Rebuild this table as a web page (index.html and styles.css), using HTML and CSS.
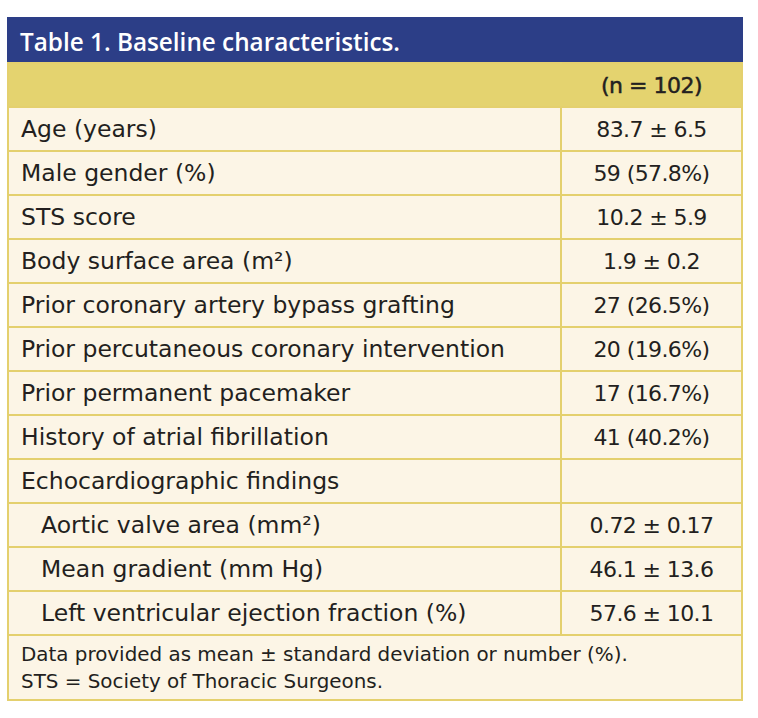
FILE: index.html
```html
<!DOCTYPE html>
<html>
<head>
<meta charset="utf-8">
<link rel="stylesheet" href="styles.css">
</head>
<body>
<div class="card">
  <div class="title">Table 1. Baseline characteristics.</div>
  <table class="tbl">
    <thead>
      <tr><th class="lab"></th><th class="val">(n = 102)</th></tr>
    </thead>
    <tbody>
      <tr><td class="lab">Age (years)</td><td class="val">83.7 ± 6.5</td></tr>
      <tr><td class="lab">Male gender (%)</td><td class="val">59 (57.8%)</td></tr>
      <tr><td class="lab">STS score</td><td class="val">10.2 ± 5.9</td></tr>
      <tr><td class="lab">Body surface area (m²)</td><td class="val">1.9 ± 0.2</td></tr>
      <tr><td class="lab">Prior coronary artery bypass grafting</td><td class="val">27 (26.5%)</td></tr>
      <tr><td class="lab">Prior percutaneous coronary intervention</td><td class="val">20 (19.6%)</td></tr>
      <tr><td class="lab">Prior permanent pacemaker</td><td class="val">17 (16.7%)</td></tr>
      <tr><td class="lab">History of atrial fibrillation</td><td class="val">41 (40.2%)</td></tr>
      <tr><td class="lab">Echocardiographic findings</td><td class="val"></td></tr>
      <tr><td class="lab sub">Aortic valve area (mm²)</td><td class="val">0.72 ± 0.17</td></tr>
      <tr><td class="lab sub">Mean gradient (mm Hg)</td><td class="val">46.1 ± 13.6</td></tr>
      <tr><td class="lab sub">Left ventricular ejection fraction (%)</td><td class="val">57.6 ± 10.1</td></tr>
    </tbody>
    <tfoot>
      <tr><td colspan="2" class="foot">Data provided as mean ± standard deviation or number (%).<br>STS = Society of Thoracic Surgeons.</td></tr>
    </tfoot>
  </table>
</div>
</body>
</html>
```

FILE: styles.css
```css
html, body { margin: 0; padding: 0; background: #ffffff; }
body { font-family: "DejaVu Sans", "Open Sans", sans-serif; color: #231f20; }
.card { margin: 17px 0 0 7px; width: 736px; }
.title {
  background: #2c3e87;
  color: #ffffff;
  font-family: "Open Sans", "DejaVu Sans", sans-serif;
  font-weight: 600;
  font-size: 24.3px;
  height: 45px;
  line-height: 49px;
  padding-left: 13px;
  box-sizing: border-box;
}
.tbl { border-collapse: collapse; width: 736px; table-layout: fixed; }
.tbl th, .tbl td { border: 2px solid #e4d06e; padding: 0; }
.tbl thead th { background: #e4d36f; height: 42px; font-weight: 400; font-size: 22px; letter-spacing: -0.5px; -webkit-text-stroke: 0.5px #231f20; }
.tbl tbody td { background: #fcf5e6; height: 42px; font-size: 23.5px; }
.tbl tbody td.val { font-size: 22px; letter-spacing: -0.6px; }
.lab { width: 539px; text-align: left; padding-left: 12px !important; }
.sub { padding-left: 32px !important; }
.val { text-align: center; }
.tbl thead th.lab { border-right-color: #e4d36f; }
.foot { background: #fcf5e6; font-size: 19.9px; line-height: 27px; padding: 5px 12px 4px !important; }
```
